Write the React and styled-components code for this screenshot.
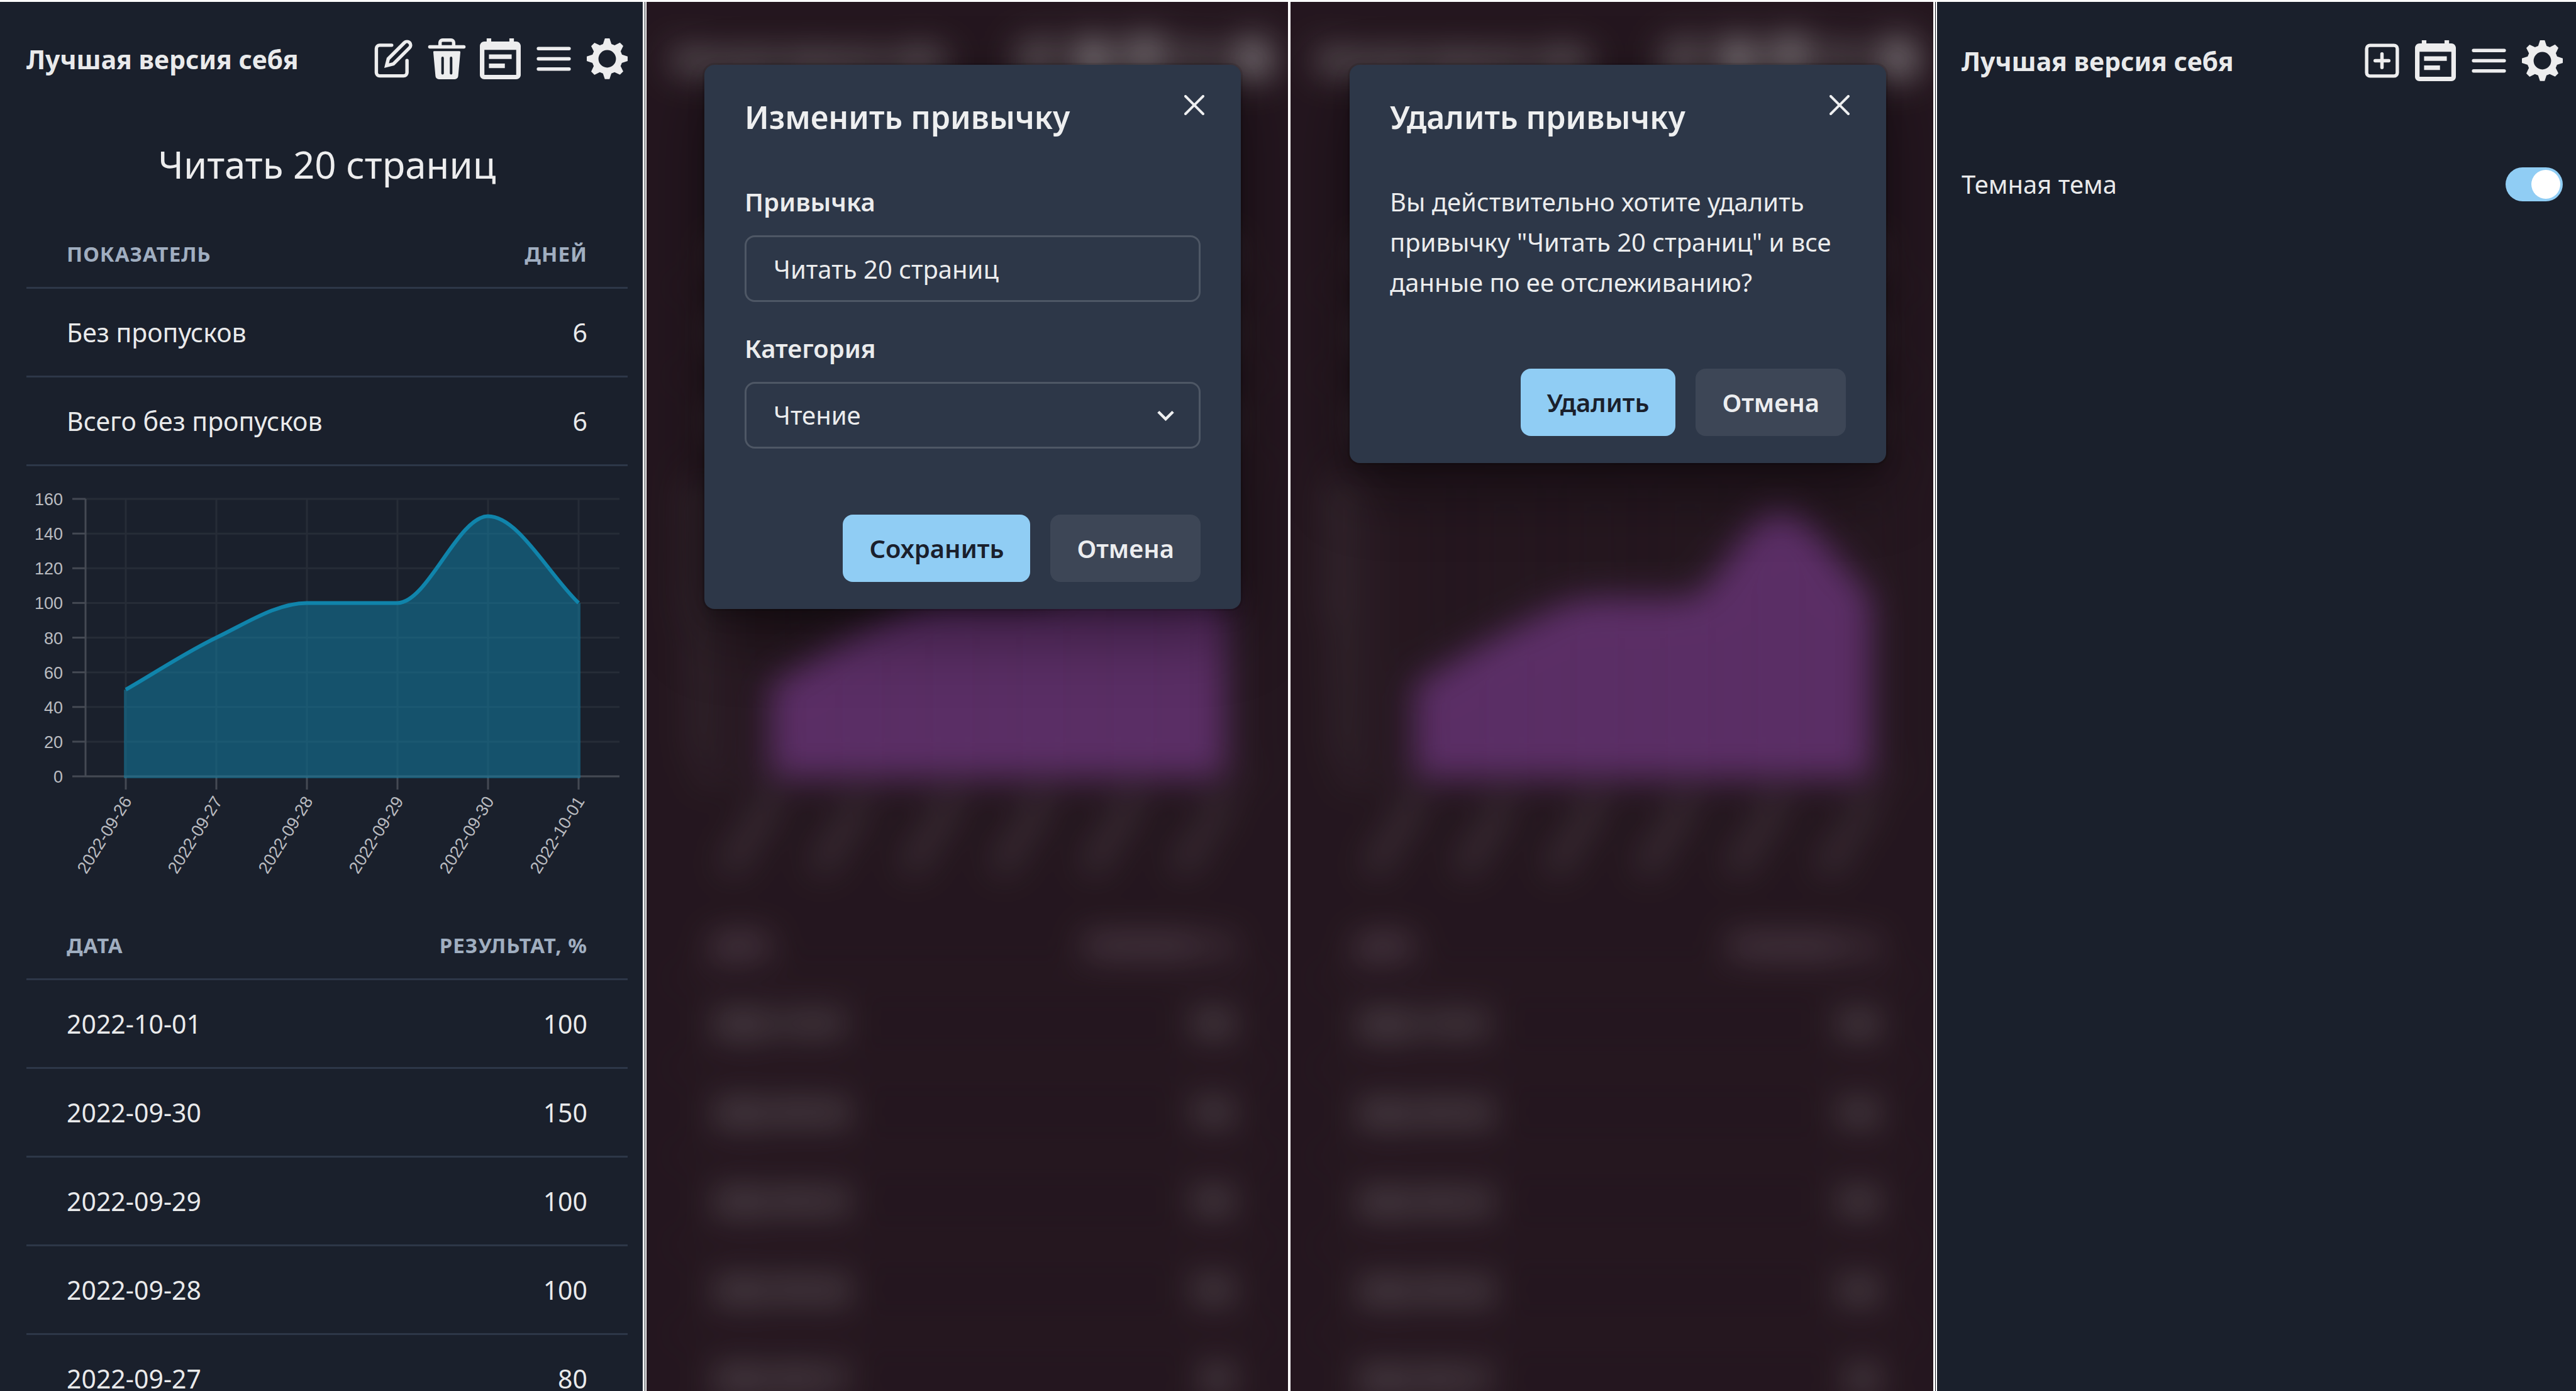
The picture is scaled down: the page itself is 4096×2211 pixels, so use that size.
import React, { useId } from 'react';
import styled, { createGlobalStyle, css } from 'styled-components';

const color = {
  bg: '#1a202c',
  veiled: '#2c1b25',
  surface: '#2d3748',
  line: '#2d3748',
  text: 'rgba(255, 255, 255, 0.92)',
  muted: '#a0aec0',
  accent: '#90cdf4',
  ink: '#1a202c',
  field: 'rgba(255, 255, 255, 0.16)',
  soft: 'rgba(255, 255, 255, 0.08)',
};

const GlobalStyle = createGlobalStyle`
  * { box-sizing: border-box; }
  body {
    margin: 0;
    background: ${color.bg};
    color: ${color.text};
    font-family: 'Noto Sans', 'Open Sans', sans-serif;
    font-size: 40px;
    line-height: 64px;
  }
  button, input, select { font: inherit; color: inherit; margin: 0; }
`;

/* ---------- page frame ---------- */

const Board = styled.div`
  display: grid;
  grid-template-columns: 1022fr 6px 1020fr 4px 1022fr 6px 1016fr;
  height: 100vh;
  overflow: hidden;
  border-top: 3px solid #fff;
`;

const Divider = styled.div`
  background: #fff;
  ${(p) => p.$double && css`
    background: linear-gradient(to right, #fff 0 3px, #10141c 3px 4px, #fff 4px);
  `}
`;

const Screen = styled.section`
  position: relative;
  min-width: 0;
  overflow: hidden;
  background: ${(p) => (p.$veiled ? color.veiled : color.bg)};
`;

const Page = styled.div`
  display: flex;
  flex-direction: column;
  padding: ${(p) => (p.$settings ? '61px 21px 0 39px' : '58px 24px 0 42px')};
`;

const Backdrop = styled.div`
  filter: blur(27px) hue-rotate(90deg);
`;

/* ---------- top bar ---------- */

const TopBar = styled.header`
  display: flex;
  align-items: center;
  justify-content: space-between;
  height: 65px;
`;

const AppName = styled.span`
  font-size: 41px;
  font-weight: 700;
  white-space: nowrap;
`;

const Actions = styled.nav`
  display: flex;
  gap: 20px;
`;

const IconButton = styled.button`
  display: flex;
  padding: 0;
  border: 0;
  background: none;
  svg { display: block; width: 65px; height: 65px; }
`;

const EditIcon = () => (
  <svg viewBox="0 0 24 24" fill="none" stroke="currentColor" strokeWidth="2" strokeLinecap="round">
    <path d="M11 4H4a2 2 0 0 0-2 2v14a2 2 0 0 0 2 2h14a2 2 0 0 0 2-2v-7" />
    <path d="M18.5 2.5a2.121 2.121 0 0 1 3 3L12 15l-4 1 1-4Z" />
  </svg>
);

const TrashIcon = () => (
  <svg viewBox="0 0 24 24" fill="currentColor">
    <path d="M19.452 7.5H4.547a.5.5 0 0 0-.5.545l1.287 14.136A2 2 0 0 0 7.326 24h9.347a2 2 0 0 0 1.992-1.819L19.95 8.045a.5.5 0 0 0-.129-.382.5.5 0 0 0-.369-.163Zm-9.2 13a.75.75 0 0 1-1.5 0v-9a.75.75 0 0 1 1.5 0Zm5 0a.75.75 0 0 1-1.5 0v-9a.75.75 0 0 1 1.5 0ZM22 4h-4.75a.25.25 0 0 1-.25-.25V2.5A2.5 2.5 0 0 0 14.5 0h-5A2.5 2.5 0 0 0 7 2.5v1.25a.25.25 0 0 1-.25.25H2a1 1 0 0 0 0 2h20a1 1 0 0 0 0-2ZM9 3.75V2.5a.5.5 0 0 1 .5-.5h5a.5.5 0 0 1 .5.5v1.25a.25.25 0 0 1-.25.25h-5.5A.25.25 0 0 1 9 3.75Z" />
  </svg>
);

const CalendarIcon = () => (
  <svg viewBox="0 0 14 14" fill="currentColor">
    <path d="M10.889 5.5H3.111v1.556h7.778V5.5Zm1.555-4.444h-.777V0h-1.556v1.056H3.889V0H2.333v1.056h-.777c-.864 0-1.548.7-1.548 1.555L0 12.5c0 .856.692 1.5 1.556 1.5h10.888C13.3 14 14 13.356 14 12.5V2.611c0-.855-.7-1.555-1.556-1.555Zm0 11.444H1.556V3.944h10.888V12.5ZM8.556 8.611H3.11v1.556h5.445V8.61Z" />
  </svg>
);

const MenuIcon = () => (
  <svg viewBox="0 0 24 24" fill="none" stroke="currentColor" strokeWidth="2" strokeLinecap="round">
    <path d="M3 6h18M3 12h18M3 18h18" />
  </svg>
);

const GearIcon = () => (
  <svg viewBox="0 0 14 14" fill="currentColor">
    <path d="M14 7.77V6.17l-1.94-.64-.45-1.09.88-1.84-1.13-1.13-1.81.91-1.09-.45L7.81 0h-1.6l-.64 1.94-1.09.45-1.84-.88-1.13 1.13.91 1.81-.45 1.09L0 6.17v1.6l1.94.64.45 1.09-.88 1.84 1.13 1.13 1.81-.91 1.09.45.65 1.93h1.6l.64-1.94 1.09-.45 1.84.88 1.13-1.13-.91-1.81.45-1.09L14 7.77ZM7 10a3 3 0 1 1 0-6 3 3 0 0 1 0 6Z" />
  </svg>
);

const AddIcon = () => (
  <svg viewBox="0 0 24 24" fill="none" stroke="currentColor" strokeWidth="2" strokeLinecap="round">
    <rect x="3" y="3" width="18" height="18" rx="2" />
    <path d="M12 8v8M8 12h8" />
  </svg>
);

const icons = {
  edit: ['Изменить', EditIcon],
  remove: ['Удалить', TrashIcon],
  add: ['Добавить', AddIcon],
  calendar: ['Календарь', CalendarIcon],
  menu: ['Меню', MenuIcon],
  settings: ['Настройки', GearIcon],
};

function Header({ actions }) {
  return (
    <TopBar>
      <AppName>Лучшая версия себя</AppName>
      <Actions>
        {actions.map((name) => {
          const [label, Icon] = icons[name];
          return (
            <IconButton key={name} type="button" aria-label={label}>
              <Icon />
            </IconButton>
          );
        })}
      </Actions>
    </TopBar>
  );
}

/* ---------- habit details ---------- */

const HabitName = styled.h1`
  margin: 87px 0 40px;
  font-size: 60px;
  font-weight: 400;
  line-height: 96px;
  text-align: center;
`;

const Table = styled.table`
  width: 100%;
  border-collapse: separate;
  border-spacing: 0;
`;

const HeadCell = styled.th`
  padding: 33px 64px 31px;
  border-bottom: 3px solid ${color.line};
  color: ${color.muted};
  font-size: 33px;
  font-weight: 700;
  letter-spacing: 1px;
  line-height: 43px;
  text-transform: uppercase;
  text-align: ${(p) => (p.$numeric ? 'right' : 'left')};
`;

const Cell = styled.td`
  padding: 42px 64px;
  border-bottom: 3px solid ${color.line};
  font-size: 41px;
  line-height: 54px;
  text-align: ${(p) => (p.$numeric ? 'right' : 'left')};
`;

function DataTable({ head, rows }) {
  return (
    <Table>
      <thead>
        <tr>
          <HeadCell scope="col">{head[0]}</HeadCell>
          <HeadCell scope="col" $numeric>{head[1]}</HeadCell>
        </tr>
      </thead>
      <tbody>
        {rows.map(([name, value]) => (
          <tr key={name}>
            <Cell>{name}</Cell>
            <Cell $numeric>{value}</Cell>
          </tr>
        ))}
      </tbody>
    </Table>
  );
}

const history = [
  ['2022-10-01', 100],
  ['2022-09-30', 150],
  ['2022-09-29', 100],
  ['2022-09-28', 100],
  ['2022-09-27', 80],
  ['2022-09-26', 50],
];

/* ---------- chart ---------- */

const ChartSvg = styled.svg`
  display: block;
  width: 100%;
  height: auto;
  text {
    font-family: 'Liberation Sans', Arial, sans-serif;
    font-size: 27px;
    fill: #babcc0;
  }
`;

const plot = { left: 94, right: 943, top: 52, bottom: 493, first: 158, step: 144 };
const series = [...history].reverse();
const xAt = (i) => plot.first + i * plot.step;
const yAt = (v) => plot.bottom - (v * (plot.bottom - plot.top)) / 160;

/* Monotone cubic: slope is zero at flats and peaks, averaged elsewhere. */
function curve() {
  const ys = series.map(([, v]) => yAt(v));
  const d = ys.slice(1).map((y, i) => y - ys[i]);
  const m = ys.map((_, i) => {
    if (i === 0) return d[0];
    if (i === ys.length - 1) return d[i - 1];
    return d[i - 1] * d[i] <= 0 ? 0 : (d[i - 1] + d[i]) / 2;
  });
  const third = plot.step / 3;
  return d
    .map((_, i) => `C${xAt(i) + third},${ys[i] + m[i] / 3} ${xAt(i + 1) - third},${ys[i + 1] - m[i + 1] / 3} ${xAt(i + 1)},${ys[i + 1]}`)
    .join(' ');
}

function Chart() {
  const path = curve();
  const startY = yAt(series[0][1]);
  const endX = xAt(series.length - 1);
  const endY = yAt(series[series.length - 1][1]);
  const values = [0, 20, 40, 60, 80, 100, 120, 140, 160];
  return (
    <ChartSvg viewBox="0 0 956 707" role="img" aria-label="Результат по дням">
      <g stroke="#262c37" strokeWidth="3">
        {values.map((v) => <line key={v} x1={plot.left} x2={plot.right} y1={yAt(v)} y2={yAt(v)} />)}
        {series.map(([date], i) => <line key={date} x1={xAt(i)} x2={xAt(i)} y1={plot.top} y2={plot.bottom} />)}
      </g>
      <g stroke="#444953" strokeWidth="3">
        {values.map((v) => <line key={v} x1={plot.left - 21} x2={plot.left} y1={yAt(v)} y2={yAt(v)} />)}
        {series.map(([date], i) => <line key={date} x1={xAt(i)} x2={xAt(i)} y1={plot.bottom} y2={plot.bottom + 21} />)}
        <line x1={plot.left} x2={plot.left} y1={plot.top} y2={plot.bottom} />
        <line x1={plot.left} x2={plot.right} y1={plot.bottom} y2={plot.bottom} />
      </g>
      <path
        fill="rgba(16, 132, 171, 0.5)"
        d={`M${plot.first - 3},${plot.bottom + 3} V${startY} L${plot.first},${startY} ${path} L${endX + 3},${endY} V${plot.bottom + 3} Z`}
      />
      <path fill="none" stroke="#1084ab" strokeWidth="6" d={`M${plot.first},${startY} ${path}`} />
      {values.map((v) => (
        <text key={v} x={plot.left - 36} y={yAt(v) + 10} textAnchor="end">{v}</text>
      ))}
      {series.map(([date], i) => (
        <text key={date} textAnchor="end" y="10" transform={`translate(${xAt(i) + 2} ${plot.bottom + 34}) rotate(-58)`}>
          {date}
        </text>
      ))}
    </ChartSvg>
  );
}

function HabitPage() {
  return (
    <Page>
      <Header actions={['edit', 'remove', 'calendar', 'menu', 'settings']} />
      <HabitName>Читать 20 страниц</HabitName>
      <DataTable head={['Показатель', 'Дней']} rows={[['Без пропусков', 6], ['Всего без пропусков', 6]]} />
      <Chart />
      <DataTable head={['Дата', 'Результат, %']} rows={history} />
    </Page>
  );
}

/* ---------- dialogs ---------- */

const Overlay = styled.div`
  position: absolute;
  inset: 0;
  display: flex;
  align-items: flex-start;
  justify-content: flex-end;
  padding: 100px 75px 0;
  background: rgba(0, 0, 0, 0.16);
`;

const Dialog = styled.div`
  position: relative;
  width: 853px;
  border-radius: 16px;
  background: ${color.surface};
  box-shadow: 0 0 0 3px rgba(0, 0, 0, 0.1), 0 13px 27px rgba(0, 0, 0, 0.2), 0 40px 107px rgba(0, 0, 0, 0.4);
`;

const DialogTitle = styled.h2`
  margin: 0;
  padding: 43px 64px 42px;
  font-size: 50px;
  font-weight: 600;
  line-height: 80px;
`;

const CloseButton = styled.button`
  position: absolute;
  top: 21px;
  right: 32px;
  display: grid;
  place-items: center;
  width: 85px;
  height: 85px;
  padding: 0;
  border: 0;
  border-radius: 16px;
  background: none;
  svg { width: 32px; height: 32px; }
`;

const DialogBody = styled.div`
  display: flex;
  flex-direction: column;
  gap: 42px;
  padding: 21px 64px 62px;
`;

const Message = styled.p`
  margin: 0;
`;

const Field = styled.div`
  display: flex;
  flex-direction: column;
`;

const Label = styled.label`
  margin-bottom: 21px;
  font-weight: 600;
`;

const control = css`
  width: 100%;
  height: 106px;
  padding: 0 43px;
  border: 3px solid ${color.field};
  border-radius: 16px;
  background: transparent;
`;

const TextInput = styled.input`
  ${control}
`;

const SelectWrap = styled.div`
  position: relative;
  svg {
    position: absolute;
    right: 29px;
    top: 27px;
    width: 53px;
    height: 53px;
    pointer-events: none;
  }
`;

const Select = styled.select`
  ${control}
  display: block;
  appearance: none;
`;

const DialogFooter = styled.div`
  display: flex;
  justify-content: flex-end;
  gap: 32px;
  padding: 43px 64px;
`;

const Button = styled.button`
  height: 107px;
  padding: 0 42px;
  border: 0;
  border-radius: 16px;
  font-weight: 600;
  color: ${(p) => (p.$primary ? color.ink : color.text)};
  background: ${(p) => (p.$primary ? color.accent : color.soft)};
`;

function Modal({ title, action, children }) {
  const id = useId();
  return (
    <Overlay>
      <Dialog role="dialog" aria-labelledby={id}>
        <DialogTitle id={id}>{title}</DialogTitle>
        <CloseButton type="button" aria-label="Закрыть">
          <svg viewBox="0 0 24 24" fill="currentColor">
            <path d="M.439 21.44a1.5 1.5 0 0 0 2.122 2.121L11.823 14.3a.25.25 0 0 1 .354 0l9.262 9.263a1.5 1.5 0 1 0 2.122-2.121L14.3 12.177a.25.25 0 0 1 0-.354l9.263-9.262A1.5 1.5 0 0 0 21.439.44L12.177 9.7a.25.25 0 0 1-.354 0L2.561.44A1.5 1.5 0 0 0 .439 2.561L9.7 11.823a.25.25 0 0 1 0 .354Z" />
          </svg>
        </CloseButton>
        <DialogBody>{children}</DialogBody>
        <DialogFooter>
          <Button type="button" $primary>{action}</Button>
          <Button type="button">Отмена</Button>
        </DialogFooter>
      </Dialog>
    </Overlay>
  );
}

function EditForm() {
  const nameId = useId();
  const categoryId = useId();
  return (
    <>
      <Field>
        <Label htmlFor={nameId}>Привычка</Label>
        <TextInput id={nameId} type="text" defaultValue="Читать 20 страниц" />
      </Field>
      <Field>
        <Label htmlFor={categoryId}>Категория</Label>
        <SelectWrap>
          <Select id={categoryId} defaultValue="reading">
            <option value="reading">Чтение</option>
          </Select>
          <svg viewBox="0 0 24 24" fill="currentColor">
            <path d="M16.59 8.59 12 13.17 7.41 8.59 6 10l6 6 6-6Z" />
          </svg>
        </SelectWrap>
      </Field>
    </>
  );
}

/* ---------- settings ---------- */

const SettingRow = styled.label`
  display: flex;
  align-items: center;
  justify-content: space-between;
  margin-top: 132px;
`;

const Switch = styled.input`
  appearance: none;
  display: flex;
  align-items: center;
  width: 91px;
  height: 54px;
  padding: 4px;
  border-radius: 27px;
  background: ${color.soft};
  &::before {
    content: '';
    width: 46px;
    height: 46px;
    border-radius: 50%;
    background: #fff;
  }
  &:checked {
    justify-content: flex-end;
    background: ${color.accent};
  }
`;

export default function App() {
  return (
    <>
      <GlobalStyle />
      <Board>
        <Screen>
          <HabitPage />
        </Screen>
        <Divider $double />
        <Screen $veiled>
          <Backdrop inert>
            <HabitPage />
          </Backdrop>
          <Modal title="Изменить привычку" action="Сохранить">
            <EditForm />
          </Modal>
        </Screen>
        <Divider />
        <Screen $veiled>
          <Backdrop inert>
            <HabitPage />
          </Backdrop>
          <Modal title="Удалить привычку" action="Удалить">
            <Message>Вы действительно хотите удалить привычку "Читать 20 страниц" и все данные по ее отслеживанию?</Message>
          </Modal>
        </Screen>
        <Divider $double />
        <Screen>
          <Page $settings>
            <Header actions={['add', 'calendar', 'menu', 'settings']} />
            <SettingRow>
              Темная тема
              <Switch type="checkbox" role="switch" defaultChecked />
            </SettingRow>
          </Page>
        </Screen>
      </Board>
    </>
  );
}
